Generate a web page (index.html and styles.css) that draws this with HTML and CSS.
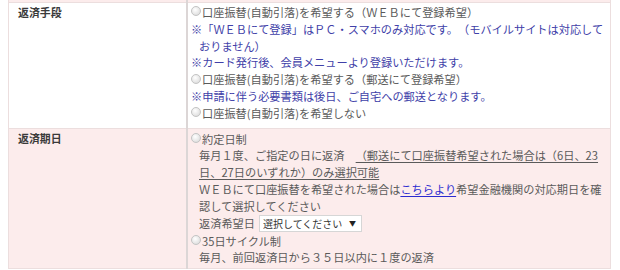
FILE: index.html
```html
<!DOCTYPE html>
<html lang="ja">
<head>
<meta charset="utf-8">
<link rel="stylesheet" href="styles.css">
</head>
<body>
<div class="wrap">
<table class="form">
  <tr class="prev"><th></th><td></td></tr>
  <tr class="row row-white">
    <th>返済手段</th>
    <td>
      <label class="opt"><input type="radio" name="pay">口座振替(自動引落)を希望する（ＷＥＢにて登録希望）</label>
      <p class="note">※「ＷＥＢにて登録」はＰＣ・スマホのみ対応です。（モバイルサイトは対応しておりません）</p>
      <p class="note flat">※カード発行後、会員メニューより登録いただけます。</p>
      <label class="opt"><input type="radio" name="pay">口座振替(自動引落)を希望する（郵送にて登録希望）</label>
      <p class="note flat">※申請に伴う必要書類は後日、ご自宅への郵送となります。</p>
      <label class="opt"><input type="radio" name="pay">口座振替(自動引落)を希望しない</label>
    </td>
  </tr>
  <tr class="row row-pink">
    <th>返済期日</th>
    <td>
      <label class="opt"><input type="radio" name="due">約定日制</label>
      <p class="sub">毎月１度、ご指定の日に返済　<u>（郵送にて口座振替希望された場合は（6日、23日、27日のいずれか）のみ選択可能</u></p>
      <p class="sub">ＷＥＢにて口座振替を希望された場合は<a href="#">こちらより</a>希望金融機関の対応期日を確認して選択してください</p>
      <div class="sub pick">返済希望日 <span class="selwrap"><select><option>選択してください</option></select></span></div>
      <label class="opt"><input type="radio" name="due">35日サイクル制</label>
      <p class="sub">毎月、前回返済日から３５日以内に１度の返済</p>
    </td>
  </tr>
</table>
</div>
</body>
</html>
```

FILE: styles.css
```css
html, body {
  margin: 0;
  padding: 0;
  background: #fff;
}
body {
  font-family: "Noto Sans CJK JP", "Noto Sans", sans-serif;
  font-size: 11.2px;
  color: #5a5a5a;
  text-spacing-trim: space-all;
}
.wrap {
  padding: 0 9px 0 8px;
}
.form {
  border-collapse: collapse;
  width: 603px;
  margin-top: -1px;
}
.form th, .form td {
  border: 1px solid #ecdede;
  vertical-align: top;
  text-align: left;
}
.form th {
  width: 159px;
  padding: 1px 9px 0 9px;
  font-size: 10.9px;
  font-weight: bold;
  color: #3a3a3a;
  border-right: 2px solid #dcd6d6;
  line-height: 16.8px;
}
.form td {
  padding: 0 4px 0 3px;
  line-height: 16.8px;
}
.prev th, .prev td {
  height: 3px;
  padding: 0;
  background: #fcecec;
  border-top: none;
}
.row-white th, .row-white td {
  background: #fff;
}
.row-white td {
  padding-top: 1px;
  padding-bottom: 6px;
}
.row-white th {
  padding-top: 1px;
}
.row-pink th, .row-pink td {
  background: #fcecec;
}
.row-pink td {
  padding-top: 2px;
  padding-bottom: 2px;
}
.row-pink th {
  padding-top: 1px;
}
.opt {
  display: flex;
  align-items: center;
}
.opt input {
  appearance: none;
  -webkit-appearance: none;
  width: 10px;
  height: 10px;
  margin: 0 1px 2px 0;
  border: 1px solid #c4c4c4;
  border-radius: 50%;
  background: radial-gradient(circle at 40% 35%, #ffffff 0%, #e2e2e2 70%, #cfcfcf 100%);
  flex: none;
}
p {
  margin: 0;
}
.note {
  color: #4040a8;
  padding-left: 8px;
  text-indent: -8px;
}
.note.flat {
  padding-left: 0;
  text-indent: 0;
}
.sub {
  padding-left: 8px;
}
.sub u {
  text-decoration: underline;
  text-underline-offset: 2px;
}
.sub a {
  color: #2b2bd0;
  text-decoration: underline;
  text-underline-offset: 2px;
}
.pick {
  display: flex;
  align-items: center;
  gap: 4px;
  height: 18px;
}
.selwrap {
  position: relative;
  display: inline-block;
}
.selwrap select {
  appearance: none;
  -webkit-appearance: none;
  font-family: "Noto Sans CJK JP", sans-serif;
  font-size: 10px;
  color: #333;
  background: #fff;
  border: 1px solid #d6d6d6;
  border-radius: 0;
  height: 17px;
  padding: 0 18px 0 3px;
  line-height: 15px;
}
.selwrap::after {
  content: "▼";
  position: absolute;
  right: 6px;
  top: 3px;
  font-size: 7px;
  line-height: 10px;
  color: #222;
  pointer-events: none;
}
```
